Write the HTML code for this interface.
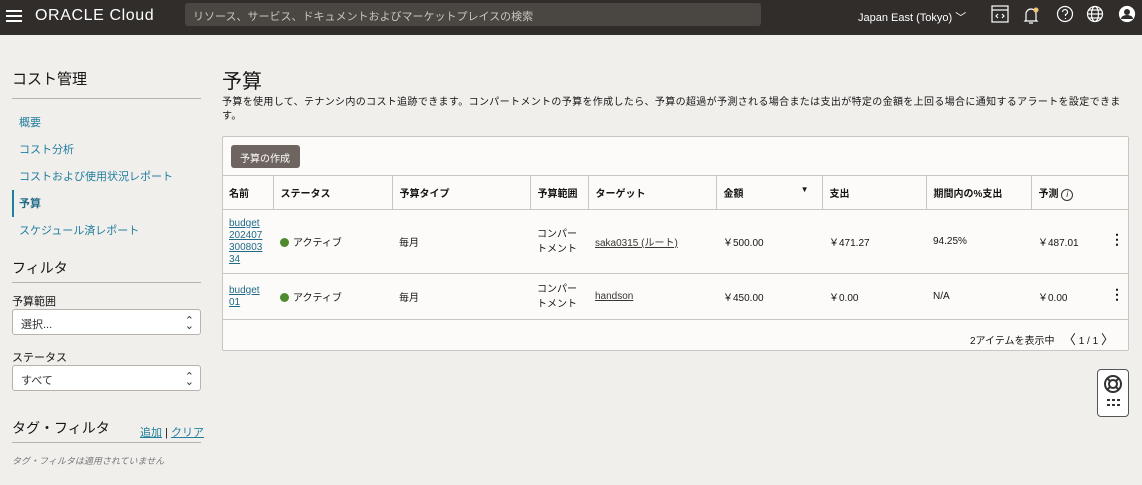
<!DOCTYPE html>
<html><head><meta charset="utf-8"><style>
*{margin:0;padding:0;box-sizing:border-box}
body{width:1142px;height:485px;overflow:hidden;background:#f1efec;font-family:"Liberation Sans","Noto Sans CJK JP",sans-serif;color:#161513;position:relative;font-size:11px}
.a{position:absolute;white-space:nowrap}
.hdr{position:absolute;left:0;top:0;width:1142px;height:35px;background:#312d2a}
.lnk{color:#227e9e}
.line{position:absolute;height:1px;background:#b9b3ae}
table{position:absolute;left:222px;top:175px;width:907px;border-collapse:collapse;table-layout:fixed}
td,th{font-size:10px;text-align:left;vertical-align:middle;padding:0 7px;border-bottom:1px solid #c9c5c1}
th{height:34px;font-weight:bold;border-right:1px solid #c9c5c1;border-top:1px solid #c9c5c1}
th:last-child{border-right:none}
.u{text-decoration:underline;color:#1f6a86}
.t{text-decoration:underline;color:#3a3631}
.dot{display:inline-block;width:9px;height:9px;border-radius:50%;background:#508a2e;margin-right:4px;vertical-align:-1px}
.sel{position:absolute;left:12px;width:189px;height:26px;background:#fff;border:1px solid #b9b3ae;border-radius:3px;font-size:11px;padding:6px 8px;color:#333}
.k{float:right;font-weight:bold;font-size:14px;line-height:10px;margin-right:-2px}
</style></head><body>
<div class="hdr"></div>
<div class="a" style="left:6px;top:10px;width:16px;height:2px;background:#fff;box-shadow:0 5px 0 #fff,0 10px 0 #fff"></div>
<div class="a" style="left:35px;top:7px;color:#fff;font-size:16px;letter-spacing:0.6px"><span style="font-weight:normal">ORACLE</span> <span style="font-weight:300">Cloud</span></div>
<div class="a" style="left:185px;top:3px;width:576px;height:23px;background:#4a4642;border-radius:3px;color:#c8c4c0;font-size:11px;padding:5px 8px">リソース、サービス、ドキュメントおよびマーケットプレイスの検索</div>
<div class="a" style="left:858px;top:9px;color:#fff;font-size:11px">Japan East (Tokyo) ﹀</div>
<svg class="a" style="left:990px;top:5px" width="150" height="22" viewBox="0 0 150 22" fill="none" stroke="#fff" stroke-width="1.2">
<rect x="2" y="1" width="16" height="16"/><line x1="2" y1="5" x2="18" y2="5"/><path d="M8 9l-2 2 2 2M12 9l2 2-2 2"/>
<path d="M36 15V9a5 5 0 0 1 10 0v6l1 1H35z M39 18h4"/><circle cx="46" cy="5" r="2.5" fill="#f0c674" stroke="none"/>
<circle cx="75" cy="9" r="7.5"/><path d="M72.5 7a2.5 2.5 0 1 1 3 2.5v1.5M75.5 13v1"/>
<circle cx="105" cy="9" r="7.5"/><ellipse cx="105" cy="9" rx="3.5" ry="7.5"/><line x1="97.5" y1="9" x2="112.5" y2="9"/><line x1="99" y1="5" x2="111" y2="5"/><line x1="99" y1="13" x2="111" y2="13"/>
<circle cx="137" cy="9" r="7.5" fill="#fff"/><circle cx="137" cy="7" r="3" fill="#312d2a" stroke="none"/><path d="M131 14a6 4 0 0 1 12 0" fill="#312d2a" stroke="none"/>
</svg>

<div class="a" style="left:12px;top:68px;font-size:15px">コスト管理</div>
<div class="line" style="left:12px;top:98px;width:189px"></div>
<div class="a lnk" style="left:19px;top:114px">概要</div>
<div class="a lnk" style="left:19px;top:141px">コスト分析</div>
<div class="a lnk" style="left:19px;top:168px">コストおよび使用状況レポート</div>
<div class="a" style="left:12px;top:190px;width:2px;height:27px;background:#227e9e"></div>
<div class="a" style="left:19px;top:195px;font-weight:bold;color:#1f6a86">予算</div>
<div class="a lnk" style="left:19px;top:222px">スケジュール済レポート</div>
<div class="a" style="left:12px;top:258px;font-size:14px">フィルタ</div>
<div class="line" style="left:12px;top:282px;width:189px"></div>
<div class="a" style="left:12px;top:293px">予算範囲</div>
<div class="sel" style="top:309px">選択...<span style="position:absolute;right:6px;top:4px;font-size:11px">⌃</span><span style="position:absolute;right:6px;top:9px;font-size:11px">⌄</span></div>
<div class="a" style="left:12px;top:349px">ステータス</div>
<div class="sel" style="top:365px">すべて<span style="position:absolute;right:6px;top:4px;font-size:11px">⌃</span><span style="position:absolute;right:6px;top:9px;font-size:11px">⌄</span></div>
<div class="a" style="left:12px;top:418px;font-size:14px">タグ・フィルタ</div>
<div class="a" style="left:140px;top:424px"><span class="u" style="color:#227e9e">追加</span> | <span class="u" style="color:#227e9e">クリア</span></div>
<div class="line" style="left:12px;top:442px;width:189px"></div>
<div class="a" style="left:12px;top:454px;font-size:9px;font-style:italic;color:#777">タグ・フィルタは適用されていません</div>

<div class="a" style="left:222px;top:65px;font-size:20px">予算</div>
<div class="a" style="left:222px;top:96px;font-size:10px;line-height:14px;letter-spacing:0.35px;white-space:normal;width:912px">予算を使用して、テナンシ内のコスト追跡できます。コンパートメントの予算を作成したら、予算の超過が予測される場合または支出が特定の金額を上回る場合に通知するアラートを設定できます。</div>

<div class="a" style="left:222px;top:136px;width:907px;height:215px;background:#fcfbfa;border:1px solid #c9c5c1;border-radius:2px"></div>
<div class="a" style="left:231px;top:145px;width:69px;height:23px;background:#6f6560;border-radius:3px;color:#fff;font-size:10px;padding:5px 9px">予算の作成</div>
<table>
<colgroup><col style="width:51px"><col style="width:119px"><col style="width:138px"><col style="width:58px"><col style="width:128px"><col style="width:106px"><col style="width:104px"><col style="width:105px"><col style="width:98px"></colgroup>
<tr><th>名前</th><th>ステータス</th><th>予算タイプ</th><th>予算範囲</th><th>ターゲット</th><th>金額<span style="float:right;font-size:8px;margin-right:6px">▼</span></th><th>支出</th><th>期間内の%支出</th><th>予測 <span style="display:inline-block;width:12px;height:12px;border:1px solid #333;border-radius:50%;font-size:8px;text-align:center;line-height:10px;font-weight:normal;font-style:italic">i</span></th></tr>
<tr style="height:64px"><td class="u" style="line-height:12px">budget<br>202407<br>300803<br>34</td><td><span class="dot"></span>アクティブ</td><td>毎月</td><td style="line-height:15px">コンパー<br>トメント</td><td class="t">saka0315 (ルート)</td><td>￥500.00</td><td>￥471.27</td><td>94.25%</td><td>￥487.01<span class="k">⋮</span></td></tr>
<tr style="height:46px"><td class="u" style="line-height:12px">budget<br>01</td><td><span class="dot"></span>アクティブ</td><td>毎月</td><td style="line-height:15px">コンパー<br>トメント</td><td class="t">handson</td><td>￥450.00</td><td>￥0.00</td><td>N/A</td><td>￥0.00<span class="k">⋮</span></td></tr>
</table>
<div class="a" style="left:970px;top:329px;font-size:10px">2アイテムを表示中 &nbsp;&nbsp;<span style="font-size:13px">〈</span> 1 / 1 <span style="font-size:13px">〉</span></div>

<div class="a" style="left:1097px;top:369px;width:32px;height:48px;background:#fff;border:1px solid #555;border-radius:4px"></div>
<svg class="a" style="left:1101px;top:373px" width="24" height="40" viewBox="0 0 24 40" fill="none" stroke="#333" stroke-width="2">
<circle cx="12" cy="11" r="8"/><circle cx="12" cy="11" r="4"/><path d="M6 5l3 3M18 5l-3 3M6 17l3-3M18 17l-3-3"/>
<g fill="#333" stroke="none"><rect x="6" y="26" width="3" height="2"/><rect x="11" y="26" width="3" height="2"/><rect x="16" y="26" width="3" height="2"/><rect x="6" y="31" width="3" height="2"/><rect x="11" y="31" width="3" height="2"/><rect x="16" y="31" width="3" height="2"/></g>
</svg>
</body></html>
